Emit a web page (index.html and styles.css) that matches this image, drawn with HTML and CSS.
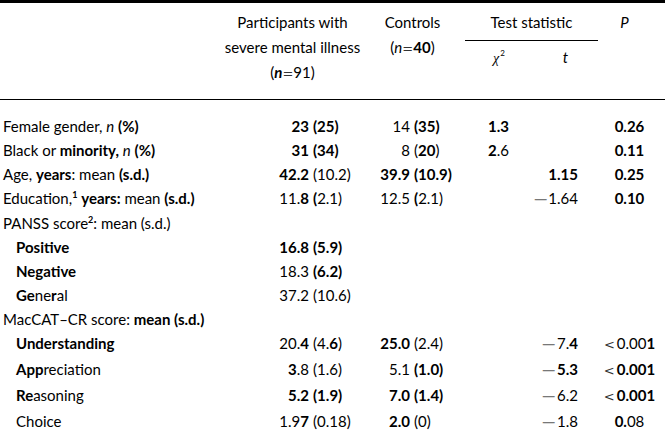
FILE: index.html
```html
<!DOCTYPE html>
<html>
<head>
<meta charset="utf-8">
<link rel="stylesheet" href="styles.css">
</head>
<body>
<table class="t">
  <colgroup>
    <col class="w1"><col class="w2"><col class="w3"><col class="w4"><col class="w5"><col class="w6">
  </colgroup>
  <thead>
    <tr class="h1">
      <th rowspan="2" class="hc"></th>
      <th rowspan="2" class="hc">Participants with<br>severe mental illness<br>(<b><i>n</i></b><span class="eq">=</span>91)</th>
      <th rowspan="2" class="hc">Controls<br>(<i>n</i><span class="eq">=</span><b>40</b>)</th>
      <th colspan="2" class="ts"><div class="ts-in">Test statistic</div></th>
      <th rowspan="2" class="hc hp"><i>P</i></th>
    </tr>
    <tr class="h2">
      <th class="hchi"><i class="chi-g">χ</i><sup>2</sup></th>
      <th class="ht"><i>t</i></th>
    </tr>
  </thead>
  <tbody>
    <tr class="first">
      <td class="lab">Female gender, <i>n</i> <b>(%)</b></td>
      <td class="v2"><div class="dv"><span class="m"><b>23</b></span><span class="s"><b>(25)</b></span></div></td>
      <td class="v3"><div class="dv"><span class="m">14</span><span class="s"><b>(35)</b></span></div></td>
      <td class="chi"><b>1.3</b></td>
      <td class="tv"></td>
      <td class="pv"><b>0.26</b></td>
    </tr>
    <tr>
      <td class="lab">Black or <b>minority,</b> <i>n</i> <b>(%)</b></td>
      <td class="v2"><div class="dv"><span class="m"><b>31</b></span><span class="s"><b>(34)</b></span></div></td>
      <td class="v3"><div class="dv"><span class="m">8</span><span class="s">(<b>20</b>)</span></div></td>
      <td class="chi"><b>2</b>.6</td>
      <td class="tv"></td>
      <td class="pv"><b>0.11</b></td>
    </tr>
    <tr>
      <td class="lab">Age, <b>years</b>: mean <b>(s.d.)</b></td>
      <td class="v2"><div class="dv"><span class="m"><b>42.2</b></span><span class="s">(10.2)</span></div></td>
      <td class="v3"><div class="dv"><span class="m"><b>39.9</b></span><span class="s"><b>(10.9)</b></span></div></td>
      <td class="chi"></td>
      <td class="tv"><b>1.15</b></td>
      <td class="pv"><b>0.25</b></td>
    </tr>
    <tr>
      <td class="lab">Education,<sup><b>1</b></sup> <b>years:</b> mean <b>(s.d.)</b></td>
      <td class="v2"><div class="dv"><span class="m">11.<b>8</b></span><span class="s"><b>(</b>2.1)</span></div></td>
      <td class="v3"><div class="dv"><span class="m">12.5</span><span class="s"><b>(</b>2.1)</span></div></td>
      <td class="chi"></td>
      <td class="tv"><span class="mn">−</span>1.64</td>
      <td class="pv"><b>0.10</b></td>
    </tr>
    <tr>
      <td class="lab">PANSS score<sup><b>2</b></sup>: mean (s.d.)</td>
      <td class="v2"></td>
      <td class="v3"></td>
      <td class="chi"></td>
      <td class="tv"></td>
      <td class="pv"></td>
    </tr>
    <tr>
      <td class="lab ind"><b>Positive</b></td>
      <td class="v2"><div class="dv"><span class="m"><b>16.8</b></span><span class="s"><b>(5.9)</b></span></div></td>
      <td class="v3"></td>
      <td class="chi"></td>
      <td class="tv"></td>
      <td class="pv"></td>
    </tr>
    <tr>
      <td class="lab ind"><b>Negative</b></td>
      <td class="v2"><div class="dv"><span class="m">18.3</span><span class="s"><b>(6.2)</b></span></div></td>
      <td class="v3"></td>
      <td class="chi"></td>
      <td class="tv"></td>
      <td class="pv"></td>
    </tr>
    <tr>
      <td class="lab ind"><b>Ge</b>ne<b>r</b>al</td>
      <td class="v2"><div class="dv"><span class="m">37.2</span><span class="s">(10.6)</span></div></td>
      <td class="v3"></td>
      <td class="chi"></td>
      <td class="tv"></td>
      <td class="pv"></td>
    </tr>
    <tr>
      <td class="lab">MacCAT–CR score: <b>mean (s.d.)</b></td>
      <td class="v2"></td>
      <td class="v3"></td>
      <td class="chi"></td>
      <td class="tv"></td>
      <td class="pv"></td>
    </tr>
    <tr>
      <td class="lab ind"><b>Understanding</b></td>
      <td class="v2"><div class="dv"><span class="m">20.<b>4</b></span><span class="s">(4.<b>6</b>)</span></div></td>
      <td class="v3"><div class="dv"><span class="m"><b>25.0</b></span><span class="s">(2.4)</span></div></td>
      <td class="chi"></td>
      <td class="tv"><span class="mn">−</span>7.<b>4</b></td>
      <td class="pv"><span class="lt">&lt;</span>0.00<b>1</b></td>
    </tr>
    <tr>
      <td class="lab ind"><b>App</b>reciation</td>
      <td class="v2"><div class="dv"><span class="m"><b>3</b>.8</span><span class="s">(1.6)</span></div></td>
      <td class="v3"><div class="dv"><span class="m">5.1</span><span class="s"><b>(1.0)</b></span></div></td>
      <td class="chi"></td>
      <td class="tv"><span class="mn">−</span><b>5.3</b></td>
      <td class="pv"><span class="lt">&lt;</span><b>0.001</b></td>
    </tr>
    <tr>
      <td class="lab ind"><b>Re</b>asoning</td>
      <td class="v2"><div class="dv"><span class="m"><b>5.2</b></span><span class="s"><b>(1.9)</b></span></div></td>
      <td class="v3"><div class="dv"><span class="m"><b>7.0</b></span><span class="s"><b>(1.4)</b></span></div></td>
      <td class="chi"></td>
      <td class="tv"><span class="mn">−</span>6.2</td>
      <td class="pv"><span class="lt">&lt;</span><b>0.001</b></td>
    </tr>
    <tr class="last">
      <td class="lab ind">Choice</td>
      <td class="v2"><div class="dv"><span class="m">1.9<b>7</b></span><span class="s">(0.18)</span></div></td>
      <td class="v3"><div class="dv"><span class="m"><b>2.0</b></span><span class="s">(0)</span></div></td>
      <td class="chi"></td>
      <td class="tv"><span class="mn">−</span>1.8</td>
      <td class="pv"><b>0.</b>08</td>
    </tr>
  </tbody>
</table>
</body>
</html>
```
FILE: styles.css
```css
html, body {
  margin: 0;
  padding: 0;
  background: #fff;
}
body {
  font-family: Lato, "Open Sans", "Liberation Sans", sans-serif;
  font-size: 15px;
  color: #000;
}
.t {
  width: 665px;
  table-layout: fixed;
  border-collapse: separate;
  border-spacing: 0;
}
.w1 { width: 215px; }
.w2 { width: 155px; }
.w3 { width: 85px; }
.w4 { width: 75px; }
.w5 { width: 68px; }
.w6 { width: 67px; }

th {
  font-weight: 400;
  padding: 0;
  line-height: 25px;
}
b { font-weight: 700; }

.h1 th {
  border-top: 3px solid #000;
  vertical-align: top;
}
.hc {
  padding-top: 7px;
  text-align: center;
  border-bottom: 1px solid #000;
}
.hp { padding-right: 14px; }
.eq {
  font-family: "DejaVu Sans", sans-serif;
  font-size: 13px;
  color: #333;
}
.ts {
  padding-top: 7px;
}
.ts-in {
  margin-left: 10px;
  padding-bottom: 5px;
  border-bottom: 1px solid #000;
  text-align: center;
}
.h2 th {
  padding-top: 4px;
  padding-bottom: 28px;
  border-bottom: 1px solid #000;
  vertical-align: top;
}
.hchi {
  text-align: left;
  padding-left: 38px !important;
}
.chi-g {
  font-family: "Liberation Serif", serif;
  font-size: 14px;
}
.hchi sup {
  font-size: 8px;
  line-height: 0;
  vertical-align: 7px;
  margin-left: 1px;
}
.ht {
  text-align: right;
  padding-right: 30px !important;
}

td {
  padding: 0;
  line-height: 24px;
  white-space: nowrap;
  vertical-align: top;
}
.first td { padding-top: 14px; }
.last td {
  padding-bottom: 6px;
  border-bottom: 6px solid #000;
}
.lab { padding-left: 3px; }
.lab.ind { padding-left: 16px; }
.lab sup {
  font-size: 9px;
  line-height: 0;
  vertical-align: 6px;
}
.dv {
  display: flex;
  column-gap: 4px;
}
.m { text-align: right; }
.v2 .m { width: 94px; }
.v3 .m { width: 40px; }
.chi { padding-left: 33px; }
.tv {
  text-align: right;
  padding-right: 20px;
}
.mn {
  display: inline-block;
  font-family: "DejaVu Sans", sans-serif;
  font-size: 14px;
  color: #777;
  transform: scaleX(1.35);
  transform-origin: right center;
  margin-right: 0;
}
.pv {
  text-align: center;
  padding-right: 4px;
}
.lt {
  font-family: "DejaVu Sans", sans-serif;
  font-size: 13px;
  color: #333;
  margin-right: 2px;
}
```
